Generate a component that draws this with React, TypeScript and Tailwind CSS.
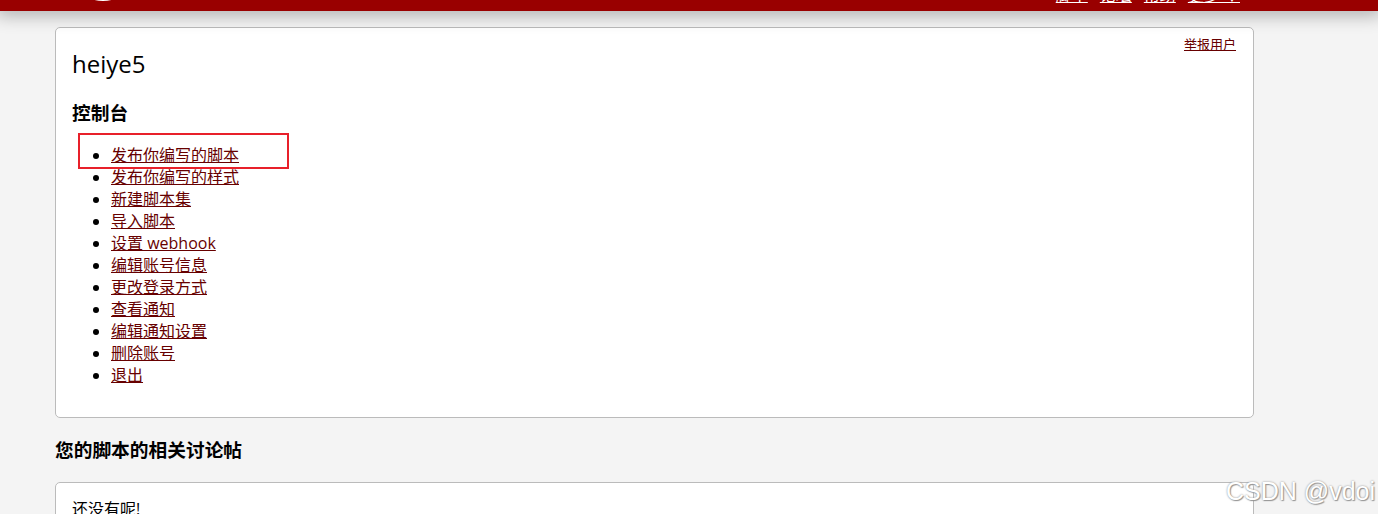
const links = [
  '发布你编写的脚本',
  '发布你编写的样式',
  '新建脚本集',
  '导入脚本',
  '设置 webhook',
  '编辑账号信息',
  '更改登录方式',
  '查看通知',
  '编辑通知设置',
  '删除账号',
  '退出',
]

const font = { fontFamily: '"Open Sans", "Noto Sans CJK SC", sans-serif' }

export default function App() {
  return (
    <div className="relative min-h-[514px] overflow-hidden bg-[#f4f4f4] text-[16px] text-black" style={font}>
      <header className="relative z-10 flex h-[11px] items-end justify-between overflow-hidden bg-[#990000] shadow-[0_0_18px_4px_rgba(0,0,0,0.3)]">
        <svg className="ml-[82px] mb-[8px]" width="42" height="20" viewBox="0 0 42 20">
          <ellipse cx="21" cy="8" rx="19" ry="10" fill="#fff" />
          <ellipse cx="21" cy="6" rx="15" ry="8" fill="#222" />
        </svg>
        <nav className="mr-[138px] mb-[6px] flex gap-3 text-[16px] leading-[20px] text-white">
          <a className="underline" href="#">脚本</a>
          <a className="underline" href="#">论坛</a>
          <a className="underline" href="#">帮助</a>
          <a className="underline" href="#">更多 ▼</a>
        </nav>
      </header>

      <div className="mx-[55px] w-[1199px]">
        <section className="relative mt-[16px] rounded-[5px] border border-[#bbb] bg-white px-4 pt-2 pb-[31px]">
          <a className="float-right mr-px text-[13px] leading-[16px] text-[#670000] underline" href="#">
            举报用户
          </a>
          <h2 className="mt-[13px] text-[24px] leading-[29px] font-medium">heiye5</h2>
          <h3 className="mt-[24px] text-[18.72px] leading-[22px] font-bold">控制台</h3>
          <ul className="mt-[20px] list-disc pl-[39px] leading-[22px]">
            {links.map((label) => (
              <li key={label}>
                <a className="text-[#670000] underline" href="#">{label}</a>
              </li>
            ))}
          </ul>
          <div className="pointer-events-none absolute top-[105px] left-[22px] h-[36px] w-[211px] border-2 border-[#e8202a]" />
        </section>

        <h3 className="mt-[21px] text-[18.72px] leading-[22px] font-bold">您的脚本的相关讨论帖</h3>

        <section className="mt-[21px] rounded-[5px] border border-[#bbb] bg-white px-4 pt-[15px] pb-4">
          <p className="leading-[22px]">还没有呢!</p>
        </section>
      </div>

      <div
        className="pointer-events-none absolute top-[477px] right-[3px] text-[25px] leading-[28px] text-white [text-shadow:0_0_2px_#888,1px_1px_1px_#999]"
        style={{ fontFamily: '"Liberation Sans", Arial, sans-serif' }}
      >
        CSDN @vdoi
      </div>
    </div>
  )
}
